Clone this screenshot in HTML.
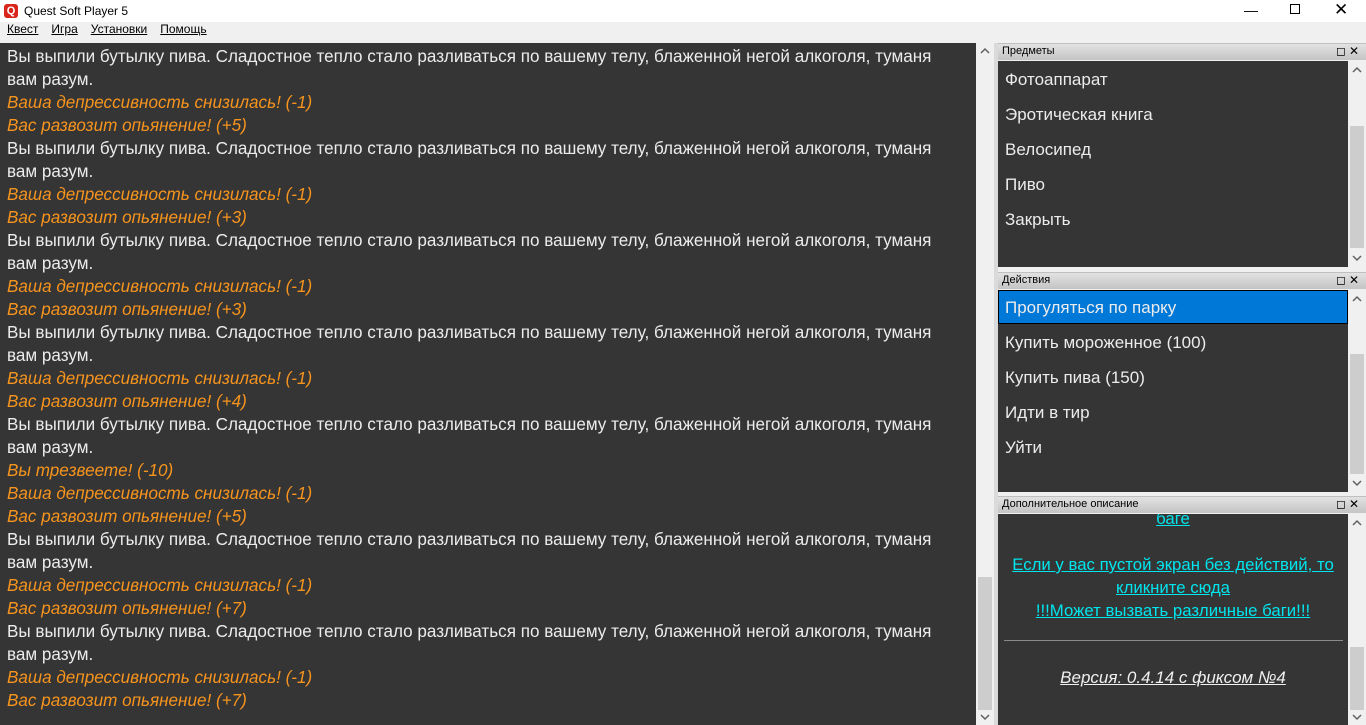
<!DOCTYPE html>
<html><head><meta charset="utf-8"><style>
*{margin:0;padding:0;box-sizing:border-box}
body{width:1366px;height:725px;overflow:hidden;background:#f0f0f0;font-family:"Liberation Sans","DejaVu Sans",sans-serif;position:relative}
.abs{position:absolute}
.title{left:0;top:0;width:1366px;height:22px;background:#fff;font-size:12px}
.menu{left:0;top:22px;height:20px;font-size:12px}
.menu span{margin-left:7px;margin-right:6px;text-decoration:underline;text-decoration-thickness:1px}
.main{left:0;top:43px;width:976px;height:682px;background:#353535;color:#ececec;font-size:17.1px;line-height:23px;padding:2px 0 0 7px}
.o{color:#f7941d;font-style:italic}
.sb{background:#f0f0f0;width:18px}
.thumb{background:#cdcdcd;width:14px;left:2px}
.arr{width:18px;height:12px}
.hdr{left:998px;width:368px;height:17px;background:linear-gradient(#e2e2e2,#c4c4c4);font-size:11px;padding:1px 0 0 4px;border-top:1px solid #c0c0c0}
.hdr b{position:absolute;right:4px;top:0;font-weight:normal;font-size:12px;letter-spacing:3px}
.panel{left:998px;width:350px;background:#353535;color:#ececec;font-size:17px}
.it{height:35px;line-height:37px;padding-left:7px}
.sel{background:#0078d7;border:1px solid #000;height:34px;line-height:34px;padding-left:6px}
.desc{color:#00e5ee;text-align:center;text-decoration:underline;font-size:16.8px;line-height:23px}
</style></head><body>
<svg width="0" height="0" style="position:absolute"><defs>
<symbol id="up" viewBox="0 0 18 12"><path d="M5 8 L9 4 L13 8" fill="none" stroke="#606060" stroke-width="1.5"/></symbol>
<symbol id="dn" viewBox="0 0 18 12"><path d="M5 4 L9 8 L13 4" fill="none" stroke="#606060" stroke-width="1.5"/></symbol>
</defs></svg>
<div class="abs title">
<div class="abs" style="left:4px;top:4px;width:14px;height:14px;background:#d9261c;border-radius:3px;color:#fff;font-size:11px;font-weight:bold;text-align:center;line-height:14px">Q</div>
<div class="abs" style="left:24px;top:4px">Quest Soft Player 5</div>
<div class="abs" style="left:1244px;top:2px;font-size:14px">&#8212;</div>
<div class="abs" style="left:1290px;top:4px;width:10px;height:10px;border:1px solid #000"></div>
<div class="abs" style="left:1334px;top:0px;font-size:17px">&#10005;</div>
</div>
<div class="abs menu"><span>Квест</span><span>Игра</span><span>Установки</span><span>Помощь</span></div>
<div class="abs main">
<div>Вы выпили бутылку пива. Сладостное тепло стало разливаться по вашему телу, блаженной негой алкоголя, туманя<br>вам разум.</div>
<div class="o">Ваша депрессивность снизилась! (-1)</div><div class="o">Вас развозит опьянение! (+5)</div>
<div>Вы выпили бутылку пива. Сладостное тепло стало разливаться по вашему телу, блаженной негой алкоголя, туманя<br>вам разум.</div>
<div class="o">Ваша депрессивность снизилась! (-1)</div><div class="o">Вас развозит опьянение! (+3)</div>
<div>Вы выпили бутылку пива. Сладостное тепло стало разливаться по вашему телу, блаженной негой алкоголя, туманя<br>вам разум.</div>
<div class="o">Ваша депрессивность снизилась! (-1)</div><div class="o">Вас развозит опьянение! (+3)</div>
<div>Вы выпили бутылку пива. Сладостное тепло стало разливаться по вашему телу, блаженной негой алкоголя, туманя<br>вам разум.</div>
<div class="o">Ваша депрессивность снизилась! (-1)</div><div class="o">Вас развозит опьянение! (+4)</div>
<div>Вы выпили бутылку пива. Сладостное тепло стало разливаться по вашему телу, блаженной негой алкоголя, туманя<br>вам разум.</div>
<div class="o">Вы трезвеете! (-10)</div>
<div class="o">Ваша депрессивность снизилась! (-1)</div><div class="o">Вас развозит опьянение! (+5)</div>
<div>Вы выпили бутылку пива. Сладостное тепло стало разливаться по вашему телу, блаженной негой алкоголя, туманя<br>вам разум.</div>
<div class="o">Ваша депрессивность снизилась! (-1)</div><div class="o">Вас развозит опьянение! (+7)</div>
<div>Вы выпили бутылку пива. Сладостное тепло стало разливаться по вашему телу, блаженной негой алкоголя, туманя<br>вам разум.</div>
<div class="o">Ваша депрессивность снизилась! (-1)</div><div class="o">Вас развозит опьянение! (+7)</div>
</div>
<div class="abs sb" style="left:976px;top:43px;height:682px"></div>
<div class="abs thumb" style="left:978px;top:577px;height:133px"></div>
<svg class="abs arr" style="left:976px;top:45px"><use href="#up"/></svg>
<svg class="abs arr" style="left:976px;top:711px"><use href="#dn"/></svg>
<div class="abs" style="left:994px;top:43px;width:4px;height:682px;background:#dadada"></div>

<div class="abs hdr" style="top:43px">Предметы<b>&#9723;&#10005;</b></div>
<div class="abs panel" style="top:61px;height:206px">
<div class="it">Фотоаппарат</div><div class="it">Эротическая книга</div><div class="it">Велосипед</div><div class="it">Пиво</div><div class="it">Закрыть</div>
</div>
<div class="abs sb" style="left:1348px;top:61px;height:206px"></div>
<div class="abs thumb" style="left:1350px;top:126px;height:122px"></div>
<svg class="abs arr" style="left:1348px;top:64px"><use href="#up"/></svg>
<svg class="abs arr" style="left:1348px;top:252px"><use href="#dn"/></svg>

<div class="abs hdr" style="top:272px">Действия<b>&#9723;&#10005;</b></div>
<div class="abs panel" style="top:290px;height:202px">
<div class="sel">Прогуляться по парку</div>
<div class="it">Купить мороженное (100)</div><div class="it">Купить пива (150)</div><div class="it">Идти в тир</div><div class="it">Уйти</div>
</div>
<div class="abs sb" style="left:1348px;top:290px;height:202px"></div>
<div class="abs thumb" style="left:1350px;top:354px;height:120px"></div>
<svg class="abs arr" style="left:1348px;top:293px"><use href="#up"/></svg>
<svg class="abs arr" style="left:1348px;top:477px"><use href="#dn"/></svg>

<div class="abs hdr" style="top:496px">Дополнительное описание<b>&#9723;&#10005;</b></div>
<div class="abs panel" style="top:514px;height:211px;overflow:hidden">
<div class="desc" style="margin-top:-7px">баге</div>
<div class="desc" style="margin-top:23px">Если у вас пустой экран без действий, то <br>кликните сюда</div>
<div class="desc">!!!Может вызвать различные баги!!!</div>
<div style="margin:18px 5px 0 6px;border-top:1px solid #8a8a8a"></div>
<div style="text-align:center;color:#f0f0f0;font-style:italic;text-decoration:underline;margin-top:25px;line-height:23px">Версия: 0.4.14 с фиксом №4</div>
</div>
<div class="abs sb" style="left:1348px;top:514px;height:211px"></div>
<div class="abs thumb" style="left:1350px;top:647px;height:63px"></div>
<svg class="abs arr" style="left:1348px;top:517px"><use href="#up"/></svg>
<svg class="abs arr" style="left:1348px;top:711px"><use href="#dn"/></svg>
</body></html>
